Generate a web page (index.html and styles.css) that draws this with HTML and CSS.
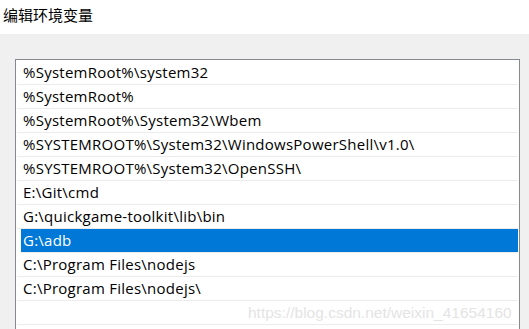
FILE: index.html
```html
<!DOCTYPE html>
<html lang="zh-CN">
<head>
    <meta charset="UTF-8">
    <title>编辑环境变量</title>
    <link rel="stylesheet" href="styles.css">
</head>
<body>
    <div class="title-bar">编辑环境变量</div>
    <div class="dialog-body">
        <div class="path-list">
            <div class="path-item">%SystemRoot%\system32</div>
            <div class="path-item">%SystemRoot%</div>
            <div class="path-item">%SystemRoot%\System32\Wbem</div>
            <div class="path-item">%SYSTEMROOT%\System32\WindowsPowerShell\v1.0\</div>
            <div class="path-item">%SYSTEMROOT%\System32\OpenSSH\</div>
            <div class="path-item">E:\Git\cmd</div>
            <div class="path-item">G:\quickgame-toolkit\lib\bin</div>
            <div class="path-item selected">G:\adb</div>
            <div class="path-item">C:\Program Files\nodejs</div>
            <div class="path-item">C:\Program Files\nodejs\</div>
            <div class="path-item"></div>
            <div class="path-item"></div>
            <div class="watermark">https://blog.csdn.net/weixin_41654160</div>
        </div>
    </div>
</body>
</html>
```

FILE: styles.css
```css
html, body{
    margin: 0;
    height: 100%;
    overflow: hidden;
}
body{
    background-color: #f0f0f0;
    font-family: "Open Sans", "Noto Sans CJK SC", sans-serif;
    color: #000;
}

.title-bar{
    background-color: #fff;
    height: 34px;
    padding-left: 3px;
    font-family: "Noto Sans CJK SC", sans-serif;
    font-size: 15px;
    line-height: 30px;
    box-sizing: border-box;
}

.dialog-body{
    padding: 25px 9px 0 15px;
}

.path-list{
    position: relative;
    background-color: #fff;
    border: 1px solid #85888d;
    padding-top: 1px;
    height: 320px;
    overflow: hidden;
}

.path-item{
    height: 23px;
    line-height: 23px;
    margin: 0 1px;
    padding-left: 6px;
    border-bottom: 1px solid #ececec;
    font-size: 15px;
    letter-spacing: 0.25px;
    white-space: nowrap;
}
.path-item.selected{
    background-color: #0078d7;
    color: #fff;
    margin-left: 5px;
    padding-left: 2px;
}

.watermark{
    position: absolute;
    left: 232px;
    top: 244px;
    font-family: "Liberation Sans", Arial, sans-serif;
    font-size: 15.5px;
    letter-spacing: 0;
    color: #e4e4e4;
    white-space: nowrap;
}
```
